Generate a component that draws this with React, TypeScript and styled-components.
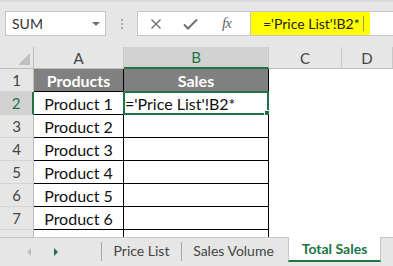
import React from "react";
import styled, { createGlobalStyle } from "styled-components";

const Global = createGlobalStyle`
  html, body { margin: 0; padding: 0; background: #ffffff; }
  * { box-sizing: border-box; }
`;

const GREEN = "#217346";
const FONT = `Lato, "Open Sans", "Liberation Sans", sans-serif`;

const Root = styled.div`
  width: 393px;
  height: 266px;
  display: flex;
  flex-direction: column;
  overflow: hidden;
  background: #ffffff;
  font-family: ${FONT};
`;

/* ---------- Formula bar ---------- */
const TopBar = styled.div`
  height: 47px;
  flex: none;
  background: #e6e6e6;
  border-top: 2px solid #dcdcdc;
  padding: 9px 0 0 5px;
  display: flex;
  align-items: flex-start;
`;

const NameBox = styled.div`
  width: 101px;
  height: 25px;
  background: #fff;
  border: 1px solid #c6c6c6;
  display: flex;
  align-items: center;
  justify-content: space-between;
  padding: 0 5px 0 6px;
  font-size: 14px;
  color: #333;
`;

const Caret = styled.span`
  width: 0;
  height: 0;
  border-left: 4px solid transparent;
  border-right: 4px solid transparent;
  border-top: 4px solid #707070;
`;

const Dots = styled.div`
  width: 31px;
  height: 25px;
  display: flex;
  flex-direction: column;
  align-items: center;
  justify-content: center;
  gap: 2px;
  padding-left: 1px;
  & > span {
    width: 2px;
    height: 2px;
    background: #a6a6a6;
  }
`;

const FuncBox = styled.div`
  width: 113px;
  height: 25px;
  background: #fff;
  border: 1px solid #c6c6c6;
  border-right: none;
  display: flex;
  align-items: center;
  padding-left: 12px;
  gap: 21px;
`;

const FxText = styled.span`
  font-family: "Liberation Serif", "DejaVu Serif", serif;
  font-style: italic;
  font-size: 15px;
  color: #666;
  letter-spacing: -1px;
  margin-left: 3px;
`;

const FormulaBox = styled.div`
  flex: 1;
  height: 25px;
  background: #fff;
  border: 1px solid #c6c6c6;
  border-right: none;
  display: flex;
`;

const Highlight = styled.div`
  width: 119px;
  height: 100%;
  background: #ffff00;
  display: flex;
  align-items: center;
  padding-left: 12px;
  font-size: 14px;
  color: #222;
  white-space: nowrap;
`;

const Cursor = styled.span`
  width: 1px;
  height: 15px;
  margin-left: 3px;
  background: #9a9a60;
`;

/* ---------- Sheet ---------- */
const Sheet = styled.div`
  flex: 1;
  display: grid;
  grid-template-columns: 34px 90px 145px 73px 1fr;
  grid-template-rows: 22px repeat(7, 23px) 1fr;
  background: #fff;
`;

const Corner = styled.div`
  background: #e6e6e6;
  border-right: 1px solid #bdbdbd;
  border-bottom: 1px solid #bdbdbd;
  position: relative;
  &::after {
    content: "";
    position: absolute;
    right: 3px;
    bottom: 3px;
    width: 0;
    height: 0;
    border-left: 12px solid transparent;
    border-bottom: 12px solid #c0c0c0;
  }
`;

const ColHead = styled.div<{ $sel?: boolean }>`
  background: ${(p) => (p.$sel ? "#d2d2d2" : "#e6e6e6")};
  border-right: 1px solid #c8c8c8;
  border-bottom: ${(p) => (p.$sel ? `2px solid ${GREEN}` : "1px solid #bdbdbd")};
  color: ${(p) => (p.$sel ? GREEN : "#444")};
  font-size: 15px;
  display: flex;
  align-items: center;
  justify-content: center;
`;

const RowHead = styled.div<{ $sel?: boolean }>`
  background: ${(p) => (p.$sel ? "#d2d2d2" : "#e6e6e6")};
  border-right: ${(p) => (p.$sel ? `2px solid ${GREEN}` : "1px solid #bdbdbd")};
  border-bottom: 1px solid #d4d4d4;
  color: ${(p) => (p.$sel ? GREEN : "#444")};
  font-size: 15px;
  display: flex;
  align-items: center;
  justify-content: center;
`;

const Cell = styled.div<{ $head?: boolean; $align?: "center" | "left"; $table?: boolean }>`
  background: ${(p) => (p.$head ? "#808080" : "#fff")};
  color: ${(p) => (p.$head ? "#fff" : "#111")};
  font-weight: ${(p) => (p.$head ? 700 : 400)};
  font-size: 16px;
  display: flex;
  align-items: center;
  justify-content: ${(p) => (p.$align === "left" ? "flex-start" : "center")};
  padding-left: ${(p) => (p.$align === "left" ? "1px" : "0")};
  border-right: ${(p) => (p.$table ? "1px solid #000" : "none")};
  border-bottom: ${(p) => (p.$table ? "1px solid #000" : "none")};
  position: relative;
  white-space: nowrap;
`;

const Selection = styled.div`
  position: absolute;
  left: -1px;
  top: -1px;
  right: -1px;
  bottom: -1px;
  border: 2px solid ${GREEN};
  pointer-events: none;
  &::after {
    content: "";
    position: absolute;
    right: -4px;
    bottom: -4px;
    width: 5px;
    height: 5px;
    background: ${GREEN};
    border: 1px solid #fff;
  }
`;

const FillerHead = styled.div`
  background: #e6e6e6;
  border-right: 1px solid #bdbdbd;
`;

const Filler = styled.div<{ $line?: boolean }>`
  background: #fff;
  border-right: ${(p) => (p.$line ? "1px solid #000" : "none")};
`;

/* ---------- Tabs ---------- */
const TabBar = styled.div`
  height: 29px;
  flex: none;
  background: #e6e6e6;
  border-top: 1px solid #c6c6c6;
  display: flex;
  align-items: stretch;
  font-size: 14px;
  color: #444;
`;

const Nav = styled.div`
  width: 101px;
  display: flex;
  align-items: center;
  padding-left: 27px;
  gap: 23px;
`;

const Tri = styled.span<{ $dir: "l" | "r"; $on?: boolean }>`
  width: 0;
  height: 0;
  border-top: 4px solid transparent;
  border-bottom: 4px solid transparent;
  ${(p) =>
    p.$dir === "l"
      ? `border-right: 4px solid ${p.$on ? GREEN : "#c0c0c0"};`
      : `border-left: 4px solid ${p.$on ? GREEN : "#c0c0c0"};`}
`;

const Sep = styled.div`
  width: 1px;
  margin: 4px 0 5px;
  background: #a6a6a6;
`;

const Tab = styled.div<{ $active?: boolean; $w: number }>`
  width: ${(p) => p.$w}px;
  display: flex;
  align-items: center;
  justify-content: center;
  margin-bottom: ${(p) => (p.$active ? "4px" : "0")};
  padding-bottom: ${(p) => (p.$active ? "0" : "4px")};
  background: ${(p) => (p.$active ? "#fff" : "transparent")};
  color: ${(p) => (p.$active ? GREEN : "#444")};
  font-weight: ${(p) => (p.$active ? 700 : 400)};
  border-left: ${(p) => (p.$active ? "1px solid #c6c6c6" : "none")};
  border-right: ${(p) => (p.$active ? "1px solid #c6c6c6" : "none")};
  border-bottom: ${(p) => (p.$active ? `2px solid ${GREEN}` : "none")};
  margin-top: ${(p) => (p.$active ? "-1px" : "0")};
`;

const Spacer = styled.div<{ $w: number }>`
  width: ${(p) => p.$w}px;
`;

const products = ["Product 1", "Product 2", "Product 3", "Product 4", "Product 5", "Product 6"];

export default function App() {
  return (
    <Root>
      <Global />
      <TopBar>
        <NameBox>
          SUM
          <Caret />
        </NameBox>
        <Dots>
          <span />
          <span />
          <span />
        </Dots>
        <FuncBox>
          <svg width="12" height="12" viewBox="0 0 12 12">
            <path d="M1.5 1.5 L10.5 10.5 M10.5 1.5 L1.5 10.5" stroke="#707070" strokeWidth="1.4" fill="none" />
          </svg>
          <svg width="15" height="12" viewBox="0 0 15 12">
            <path d="M1 6.5 L5 10.5 L14 1.5" stroke="#707070" strokeWidth="2" fill="none" />
          </svg>
          <FxText>fx</FxText>
        </FuncBox>
        <FormulaBox>
          <Highlight>
            ='Price List'!B2*
            <Cursor />
          </Highlight>
        </FormulaBox>
      </TopBar>

      <Sheet>
        <Corner />
        <ColHead>A</ColHead>
        <ColHead $sel>B</ColHead>
        <ColHead>C</ColHead>
        <ColHead>D</ColHead>

        <RowHead>1</RowHead>
        <Cell $head $table>Products</Cell>
        <Cell $head $table>Sales</Cell>
        <Cell />
        <Cell />

        {products.map((p, i) => (
          <React.Fragment key={p}>
            <RowHead $sel={i === 0}>{i + 2}</RowHead>
            <Cell $table>{p}</Cell>
            <Cell $table $align="left">
              {i === 0 ? "='Price List'!B2*" : ""}
              {i === 0 && <Selection />}
            </Cell>
            <Cell />
            <Cell />
          </React.Fragment>
        ))}

        <FillerHead />
        <Filler $line />
        <Filler $line />
        <Filler />
        <Filler />
      </Sheet>

      <TabBar>
        <Nav>
          <Tri $dir="l" />
          <Tri $dir="r" $on />
        </Nav>
        <Sep />
        <Tab $w={79}>Price List</Tab>
        <Sep />
        <Tab $w={103}>Sales Volume</Tab>
        <Spacer $w={3} />
        <Tab $w={93} $active>Total Sales</Tab>
      </TabBar>
    </Root>
  );
}
